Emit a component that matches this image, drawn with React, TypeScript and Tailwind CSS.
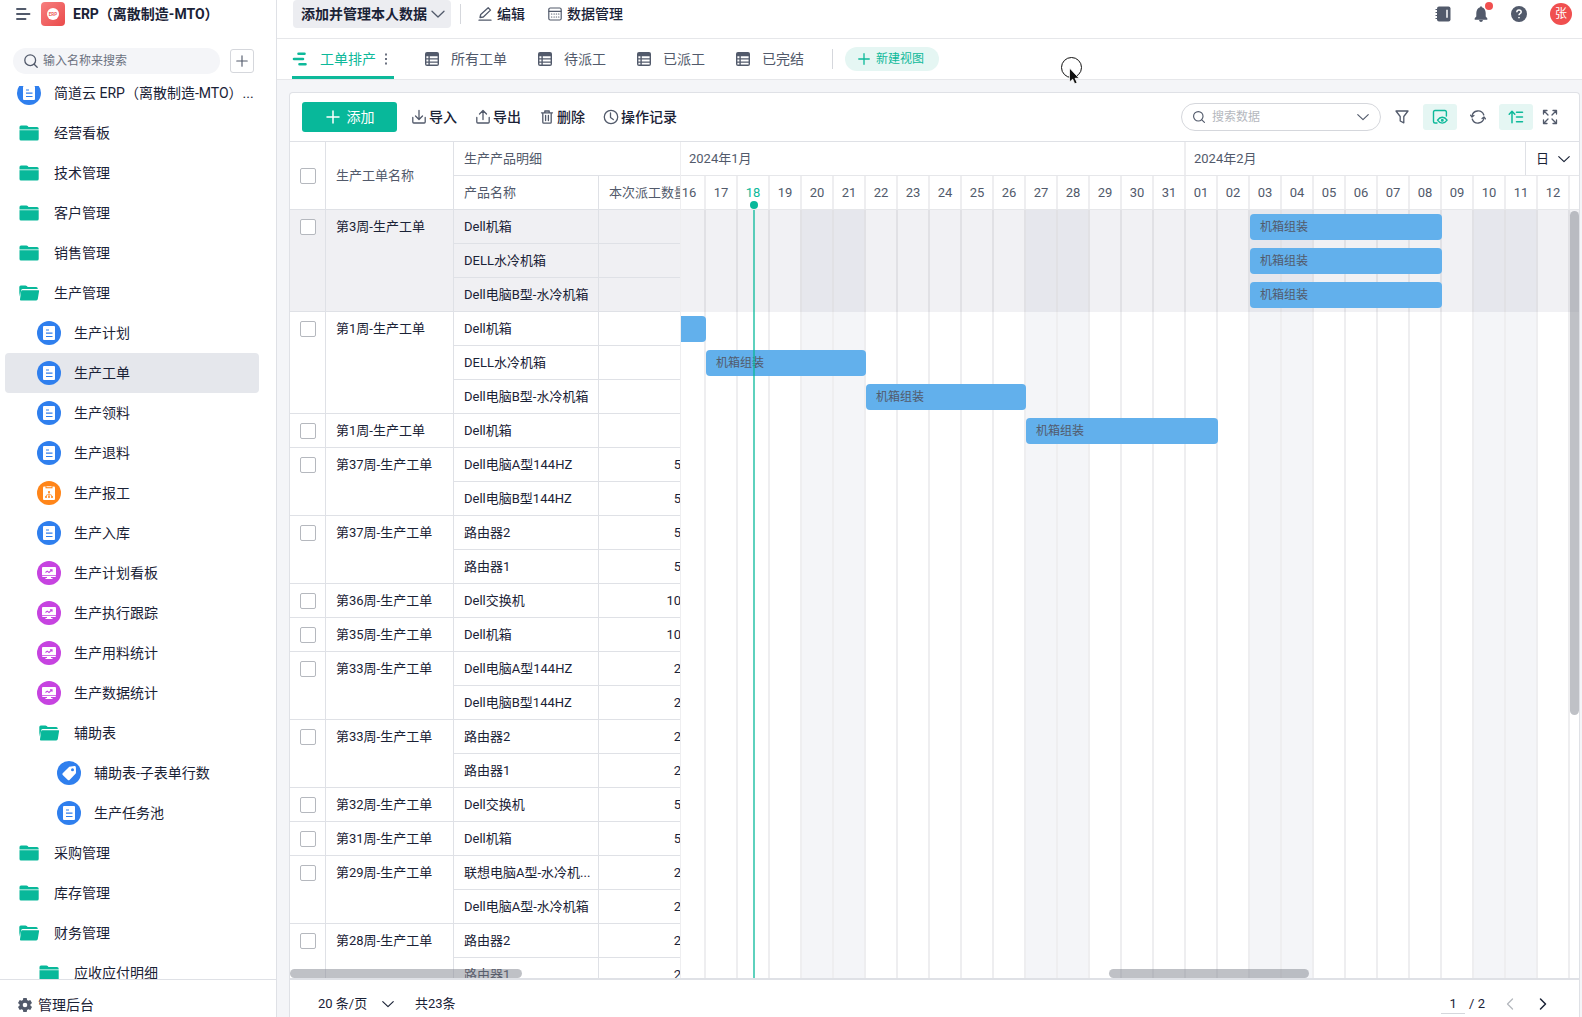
import { useState } from "react";
import type { ReactNode } from "react";
import { clsx } from "clsx";

type IconKind = "doc" | "folder" | "folderOpen" | "report" | "board" | "tag";

interface NavItem {
  name: string;
  icon: IconKind;
  level: 0 | 1 | 2;
}

const navItems: NavItem[] = [
  { name: "简道云 ERP（离散制造-MTO）...", icon: "doc", level: 0 },
  { name: "经营看板", icon: "folder", level: 0 },
  { name: "技术管理", icon: "folder", level: 0 },
  { name: "客户管理", icon: "folder", level: 0 },
  { name: "销售管理", icon: "folder", level: 0 },
  { name: "生产管理", icon: "folderOpen", level: 0 },
  { name: "生产计划", icon: "doc", level: 1 },
  { name: "生产工单", icon: "doc", level: 1 },
  { name: "生产领料", icon: "doc", level: 1 },
  { name: "生产退料", icon: "doc", level: 1 },
  { name: "生产报工", icon: "report", level: 1 },
  { name: "生产入库", icon: "doc", level: 1 },
  { name: "生产计划看板", icon: "board", level: 1 },
  { name: "生产执行跟踪", icon: "board", level: 1 },
  { name: "生产用料统计", icon: "board", level: 1 },
  { name: "生产数据统计", icon: "board", level: 1 },
  { name: "辅助表", icon: "folderOpen", level: 1 },
  { name: "辅助表-子表单行数", icon: "tag", level: 2 },
  { name: "生产任务池", icon: "doc", level: 2 },
  { name: "采购管理", icon: "folder", level: 0 },
  { name: "库存管理", icon: "folder", level: 0 },
  { name: "财务管理", icon: "folderOpen", level: 0 },
  { name: "应收应付明细", icon: "folder", level: 1 },
];

const orders = [
  { name: "第3周-生产工单", lines: [["Dell机箱", ""], ["DELL水冷机箱", ""], ["Dell电脑B型-水冷机箱", ""]] },
  { name: "第1周-生产工单", lines: [["Dell机箱", ""], ["DELL水冷机箱", ""], ["Dell电脑B型-水冷机箱", ""]] },
  { name: "第1周-生产工单", lines: [["Dell机箱", ""]] },
  { name: "第37周-生产工单", lines: [["Dell电脑A型144HZ", "5"], ["Dell电脑B型144HZ", "5"]] },
  { name: "第37周-生产工单", lines: [["路由器2", "5"], ["路由器1", "5"]] },
  { name: "第36周-生产工单", lines: [["Dell交换机", "10"]] },
  { name: "第35周-生产工单", lines: [["Dell机箱", "10"]] },
  { name: "第33周-生产工单", lines: [["Dell电脑A型144HZ", "2"], ["Dell电脑B型144HZ", "2"]] },
  { name: "第33周-生产工单", lines: [["路由器2", "2"], ["路由器1", "2"]] },
  { name: "第32周-生产工单", lines: [["Dell交换机", "5"]] },
  { name: "第31周-生产工单", lines: [["Dell机箱", "5"]] },
  { name: "第29周-生产工单", lines: [["联想电脑A型-水冷机...", "2"], ["Dell电脑A型-水冷机箱", "2"]] },
  { name: "第28周-生产工单", lines: [["路由器2", "2"], ["路由器1", "2"]] },
];

const days = [
  "16", "17", "18", "19", "20", "21", "22", "23", "24", "25", "26", "27", "28", "29",
  "30", "31", "01", "02", "03", "04", "05", "06", "07", "08", "09", "10", "11", "12",
];
const weekends = [4, 5, 11, 12, 18, 19, 25, 26];
const TODAY = 2;

const DAY_WIDTH = 32;
const ROW_HEIGHT = 34;

// row, first day (index into days) and length in days
const bars = [
  { row: 0, start: 18, span: 6, label: "机箱组装" },
  { row: 1, start: 18, span: 6, label: "机箱组装" },
  { row: 2, start: 18, span: 6, label: "机箱组装" },
  { row: 3, start: -4, span: 5, label: "" },
  { row: 4, start: 1, span: 5, label: "机箱组装" },
  { row: 5, start: 6, span: 5, label: "机箱组装" },
  { row: 6, start: 11, span: 6, label: "机箱组装" },
];

const views = ["所有工单", "待派工", "已派工", "已完结"];

interface GlyphProps {
  size?: number;
  width?: number;
  className?: string;
  children: ReactNode;
}

function Glyph({ size = 16, width = 1.3, className, children }: GlyphProps) {
  return (
    <svg
      width={size}
      height={size}
      viewBox="0 0 16 16"
      fill="none"
      stroke="currentColor"
      strokeWidth={width}
      strokeLinecap="round"
      strokeLinejoin="round"
      className={clsx("shrink-0", className)}
      aria-hidden="true"
    >
      {children}
    </svg>
  );
}

function Chevron({ className }: { className?: string }) {
  return (
    <Glyph className={className}>
      <path d="M2 5.200 8 11l6-5.800" />
    </Glyph>
  );
}

function SearchGlyph({ className }: { className?: string }) {
  return (
    <Glyph className={className}>
      <circle cx="7.2" cy="7.2" r="5.400" />
      <path d="m11.200 11.200 3 3" />
    </Glyph>
  );
}

function PlusGlyph({ size = 16, width = 1.3 }: { size?: number; width?: number }) {
  return (
    <Glyph size={size} width={width}>
      <path d="M8 2v12M2 8h12" />
    </Glyph>
  );
}

function TableGlyph() {
  return (
    <svg width="16" height="16" viewBox="0 0 16 16" className="shrink-0" aria-hidden="true">
      <rect x="1" y="1" width="14" height="14" rx="2" fill="#525a6b" />
      <path
        d="M2.4 5.3h2v2h-2zM5.8 5.3h7.8v2H5.8zM2.4 8.5h2v2h-2zM5.8 8.5h7.8v2H5.8zM2.4 11.7h2v1.9h-2zM5.8 11.7h7.8v1.9H5.8z"
        fill="#fff"
      />
    </svg>
  );
}

function NavIcon({ kind }: { kind: IconKind }) {
  if (kind === "folder") {
    return (
      <svg width="24" height="24" viewBox="0 0 24 24" fill="#08b89a" aria-hidden="true">
        <path d="M2.5 6Q2.5 4.500 4 4.500h5.500q.7 0 1.200.600L11.500 6H20q1.700 0 1.700 1.700V8H2.500z" />
        <path d="M2.500 9.300h19.200V18q0 1.500-1.500 1.500H4q-1.500 0-1.500-1.500z" />
        <path d="M2.500 8h19.200v1.300H2.500z" opacity=".45" />
      </svg>
    );
  }
  if (kind === "folderOpen") {
    return (
      <svg width="24" height="24" viewBox="0 0 24 24" fill="#08b89a" aria-hidden="true">
        <path d="M2.300 6q0-1.500 1.500-1.500h4.700q.7 0 1.200.500l1 1h8.500q1.500 0 1.500 1.500V8H5.800q-1.300 0-1.600 1.300L2.900 15.500 2.300 12z" />
        <path d="M5.300 9.200h16.200q.8 0 .6.900l-1.300 8q-.3 1.400-1.500 1.400H4q-1.300 0-1-1.200L4.200 10q.200-.8 1.100-.8z" />
      </svg>
    );
  }
  if (kind === "report") {
    return (
      <svg width="24" height="24" viewBox="0 0 24 24" aria-hidden="true">
        <circle cx="12" cy="12" r="12" fill="#ff8519" />
        <rect x="6" y="5.500" width="12" height="13.500" rx="1" fill="#fff" />
        <path d="M8.500 5.300h7v2h-7z" fill="#ff8519" />
        <path d="M9.500 5.300h5v.900h-5z" fill="#fff" />
        <path d="M12 11v4.500M9 15.500l.800-1.700h4.400l.8 1.700" stroke="#ff8519" strokeWidth=".7" fill="none" />
        <circle cx="12" cy="11" r="1.100" fill="#ff8519" />
        <circle cx="9" cy="16" r="1" fill="#ff8519" />
        <circle cx="12" cy="16" r="1" fill="#ff8519" />
        <circle cx="15" cy="16" r="1" fill="#ff8519" />
      </svg>
    );
  }
  if (kind === "board") {
    return (
      <svg width="24" height="24" viewBox="0 0 24 24" aria-hidden="true">
        <circle cx="12" cy="12" r="12" fill="#c643e0" />
        <path d="M6 6h12q1 0 1 1v7H5V7q0-1 1-1z" fill="#fff" />
        <path d="M5 14.800h14q0 1.200-1 1.200h-4v1h1.500v1h-7v-1H10v-1H6q-1 0-1-1.200z" fill="#fff" />
        <path d="m8.500 11.500 1.700-1.400 1.800 1.400 2.600-2.400M13 8.800h2v2" stroke="#c643e0" strokeWidth="1.100" fill="none" />
      </svg>
    );
  }
  if (kind === "tag") {
    return (
      <svg width="24" height="24" viewBox="0 0 24 24" aria-hidden="true">
        <circle cx="12" cy="12" r="12" fill="#2f7fee" />
        <path
          d="M12.300 5.800 17.500 5q1.300 0 1.400 1.400l.1 5q0 .8-.5 1.300l-6 6.200q-.8.700-1.600 0l-5.200-5q-.8-.8 0-1.600z"
          fill="#fff"
        />
        <circle cx="15.500" cy="8.800" r="1.500" fill="#2f7fee" />
      </svg>
    );
  }
  return (
    <svg width="24" height="24" viewBox="0 0 24 24" aria-hidden="true">
      <circle cx="12" cy="12" r="12" fill="#2f7fee" />
      <rect x="6" y="5" width="12" height="14" rx="1" fill="#fff" />
      <path d="M9 9h3M9 12.200h6.500M9 15.500h6.500" stroke="#2f7fee" strokeWidth="1.200" />
    </svg>
  );
}

function Sidebar() {
  const [active, setActive] = useState("生产工单");

  return (
    <aside className="flex w-[277px] shrink-0 flex-col border-r border-[#dfe1e6] bg-white">
      <div className="flex h-7 items-center pl-[15px]">
        <button aria-label="菜单" className="text-[#525a6b]">
          <Glyph width={1.9}>
            <path d="M2 3h8.500M2 8h12.500M2 13h8.500" />
          </Glyph>
        </button>
        <svg width="24" height="24" viewBox="0 0 24 24" className="ml-2.5" aria-hidden="true">
          <defs>
            <linearGradient id="logo" x1="0" y1="0" x2="1" y2="1">
              <stop offset="0" stopColor="#f78080" />
              <stop offset="1" stopColor="#ea4a4a" />
            </linearGradient>
          </defs>
          <rect width="24" height="24" rx="4" fill="url(#logo)" />
          <circle cx="12" cy="12" r="6" fill="#fff" />
          <text x="12" y="13.700" fontSize="4.500" fontWeight="700" textAnchor="middle" fill="#ee5f5f">ERP</text>
        </svg>
        <h1 className="ml-2 text-sm font-bold">ERP（离散制造-MTO）</h1>
      </div>

      <div className="mt-5 flex items-center gap-2.5 pl-[13px]">
        <label className="flex h-[26px] w-[207px] items-center gap-1 rounded-full bg-[#f4f5f8] pl-2.5">
          <SearchGlyph className="text-[#525a6b]" />
          <input
            aria-label="输入名称来搜索"
            placeholder="输入名称来搜索"
            className="w-full min-w-0 bg-transparent text-xs outline-none placeholder:text-[#6b7180]"
          />
        </label>
        <button
          aria-label="新建"
          className="flex size-6 items-center justify-center rounded-[3px] border border-[#d5d7dc] text-[#525a6b]"
        >
          <PlusGlyph size={14} />
        </button>
      </div>

      <nav className="mt-3 min-h-0 flex-1 overflow-hidden">
        <ul className="-mt-[13px] pl-[5px]">
          {navItems.map((item) => (
            <li key={item.name}>
              <a
                href="#"
                onClick={() => setActive(item.name)}
                className={clsx(
                  "flex h-10 w-[254px] items-center gap-[13px] rounded-[4px] text-sm whitespace-nowrap",
                  item.level === 0 && "pl-3",
                  item.level === 1 && "pl-8",
                  item.level === 2 && "pl-[52px]",
                  item.name === active && "bg-[#e5e7ec]"
                )}
              >
                <span className="size-6 shrink-0">
                  <NavIcon kind={item.icon} />
                </span>
                {item.name}
              </a>
            </li>
          ))}
        </ul>
      </nav>

      <div className="h-[38px] shrink-0 border-t border-[#dfe1e6] pt-[15px] pl-[17px]">
        <a href="#" className="flex h-5 items-center gap-[5px] text-sm">
          <svg width="16" height="16" viewBox="0 0 16 16" aria-hidden="true">
            <path
              fill="#525a6b"
              fillRule="evenodd"
              d="M6.300 1h3.400l.4 2.100 1.200.7 2-.7 1.700 2.900-1.600 1.400v1.200l1.600 1.400-1.700 2.900-2-.7-1.200.7-.4 2.100H6.300l-.4-2.100-1.200-.7-2 .7L1 10l1.600-1.400V7.400L1 6l1.700-2.900 2 .7 1.200-.7zM8 5.700a2.300 2.300 0 1 0 0 4.600 2.300 2.300 0 0 0 0-4.600z"
            />
          </svg>
          管理后台
        </a>
      </div>
    </aside>
  );
}

function TopBar() {
  return (
    <header className="flex h-[39px] shrink-0 items-start justify-between border-b border-[#e6e7ea] bg-white pr-2.5 pl-4">
      <div className="flex h-7 items-center">
        <button className="flex h-7 items-center gap-[3px] rounded-[4px] bg-[#ecedf1] pr-[5px] pl-2 text-sm font-bold">
          添加并管理本人数据
          <Chevron className="text-[#525a6b]" />
        </button>
        <span className="ml-[9px] h-5 w-px bg-[#d5d7dc]" />
        <button className="ml-4 flex items-center gap-1 text-sm font-medium">
          <Glyph className="text-[#525a6b]">
            <path d="M2 14.200h12M3 11.500l.7-3L11.200 1.800l2.300 2.300L6.300 11z" />
          </Glyph>
          编辑
        </button>
        <button className="ml-[22px] flex items-center gap-1 text-sm font-medium">
          <Glyph width={1.200} className="text-[#525a6b]">
            <rect x="1.800" y="2" width="12.400" height="12" rx="1.500" />
            <path d="M2 5.300h12" />
            <path d="M4.500 8h.3M7 8h.3M9.300 8h.3M11.600 8h.3M4.500 11h.3M7 11h.3M9.300 11h.3M11.600 11h.3" />
          </Glyph>
          数据管理
        </button>
      </div>

      <div className="flex h-7 items-center text-[#525a6b]">
        <button aria-label="通讯录">
          <svg width="16" height="16" viewBox="0 0 16 16" aria-hidden="true">
            <rect x="2" y=".5" width="13.500" height="15" rx="2" fill="#525a6b" />
            <path d="M.5 3.500h3M.5 6.500h3M.5 9.500h3M.5 12.500h3" stroke="#525a6b" />
            <path d="M12 3.800v8" stroke="#fff" strokeWidth="1.500" />
          </svg>
        </button>
        <button aria-label="消息" className="relative ml-[22px]">
          <svg width="16" height="16" viewBox="0 0 16 16" fill="#525a6b" aria-hidden="true">
            <path d="M8 .3q.9 0 .9 1Q12.500 2.500 12.700 7v3.500l1.600 1.800v1.500H1.700v-1.500l1.600-1.800V7q.2-4.500 3.800-5.700 0-1 .9-1zM6 14h4q-.4 1.900-2 1.900T6 14z" />
          </svg>
          <span className="absolute -top-1 -right-1 size-2 rounded-full bg-[#f04f4f]" />
        </button>
        <button aria-label="帮助" className="ml-[22px]">
          <svg width="16" height="16" viewBox="0 0 16 16" aria-hidden="true">
            <circle cx="8" cy="8" r="8" fill="#525a6b" />
            <path
              d="M5.800 6.200q.1-2.200 2.200-2.200t2.200 2q0 1-1.200 1.700Q8 8.300 8 9.300M8 11v1.300"
              fill="none"
              stroke="#fff"
              strokeWidth="1.500"
            />
          </svg>
        </button>
        <span className="ml-[23px] flex size-[22px] items-center justify-center rounded-full bg-[#f04f4f] text-xs text-white">
          张
        </span>
      </div>
    </header>
  );
}

function ViewTabs() {
  return (
    <nav className="flex h-[41px] shrink-0 items-center border-b border-[#e6e7ea] bg-white pl-[15px] text-sm text-[#525a6b]">
      <div className="flex h-full items-center gap-[30px]">
        <a
          href="#"
          className="flex h-full items-center border-b-[3px] border-[#0db99a] pt-[3px] text-[#0db99a]"
        >
          <svg width="16" height="16" viewBox="0 0 16 16" className="mr-3" aria-hidden="true">
            <path
              d="M6.500 2.800h6M2 8h9M7.500 13.200h6"
              stroke="#0db99a"
              strokeWidth="2.600"
              strokeLinecap="round"
            />
          </svg>
          工单排产
          <svg width="16" height="16" viewBox="0 0 16 16" className="ml-0.5" fill="#6b7180" aria-hidden="true">
            <path d="M7 2.500h2v2H7zM7 7h2v2H7zM7 11.500h2v2H7z" />
          </svg>
        </a>
        {views.map((view) => (
          <a key={view} href="#" className="flex items-center gap-[11px]">
            <TableGlyph />
            {view}
          </a>
        ))}
      </div>
      <span className="ml-7 h-5 w-px bg-[#d5d7dc]" />
      <button className="ml-3 flex h-6 items-center gap-[5px] rounded-full bg-[#e5f6f3] px-3 text-xs text-[#0db99a]">
        <PlusGlyph size={14} width={1.500} />
        <span className="pr-[3px]">新建视图</span>
      </button>
    </nav>
  );
}

function Toolbar() {
  return (
    <div className="flex h-[49px] shrink-0 items-center border-b border-[#dfe1e6] pr-[21px] pl-3">
      <button className="flex h-[30px] w-[95px] items-center justify-center gap-1.5 rounded-[3px] bg-[#08b89a] text-sm text-white">
        <PlusGlyph width={1.500} />
        添加
      </button>
      <div className="ml-3.5 flex items-center gap-[18px] text-sm font-medium">
        <button className="flex items-center gap-0.5">
          <Glyph className="text-[#525a6b]">
            <path d="M8 1.500v8.500M4.500 7 8 10.500 11.500 7M1.800 8.500V13q0 1 1 1h10.400q1 0 1-1V8.500" />
          </Glyph>
          导入
        </button>
        <button className="flex items-center gap-0.5">
          <Glyph className="text-[#525a6b]">
            <path d="M8 10.500V2M4.500 5 8 1.500 11.500 5M1.800 8.500V13q0 1 1 1h10.400q1 0 1-1V8.500" />
          </Glyph>
          导出
        </button>
        <button className="flex items-center gap-0.5">
          <Glyph className="text-[#525a6b]">
            <path d="M2.500 3.800h11M5.800 3.500V2h4.400v1.500M3.800 4v9.200q0 1 1 1h6.400q1 0 1-1V4M6.600 6.500v5M9.400 6.500v5" />
          </Glyph>
          删除
        </button>
        <button className="flex items-center gap-0.5">
          <Glyph className="text-[#525a6b]">
            <circle cx="8" cy="8" r="6.700" />
            <path d="M7.500 4v4.500l2.800 2" />
          </Glyph>
          操作记录
        </button>
      </div>

      <div className="ml-auto flex items-center text-[#525a6b]">
        <label className="flex h-7 w-[200px] items-center gap-1.5 rounded-full border border-[#d5d7dc] px-2.5">
          <SearchGlyph className="size-3.5" />
          <input
            aria-label="搜索数据"
            placeholder="搜索数据"
            className="w-full min-w-0 bg-transparent text-xs outline-none placeholder:text-[#b5b8be]"
          />
          <Chevron className="size-3.5" />
        </label>
        <button aria-label="筛选" className="ml-[13px]">
          <Glyph>
            <path d="M2 2h12L9.800 7.500v6.300L6.200 12V7.500z" />
          </Glyph>
        </button>
        <button
          aria-label="显示设置"
          className="ml-[13px] flex h-[26px] w-[34px] items-center justify-center rounded-[3px] bg-[#e5f6f3] text-[#0db99a]"
        >
          <Glyph width={1.400}>
            <path d="M14.400 7V3q0-1.500-1.500-1.500H3Q1.500 1.500 1.500 3v9.500Q1.500 14 3 14h2" />
            <path d="M5.500 11.200q2-2.900 4.800-2.900t4.800 2.900q-2 2.900-4.800 2.900t-4.800-2.900z" />
            <circle cx="10.300" cy="11.200" r=".8" />
          </Glyph>
        </button>
        <button aria-label="刷新" className="ml-[13px]">
          <Glyph>
            <path d="M2 7.300A6.100 6.100 0 0 1 13.800 6M14 8.700A6.100 6.100 0 0 1 2.200 10" />
            <path d="M.5 6.200 2 8l1.900-1.500M15.500 9.800 14 8l-1.900 1.500" />
          </Glyph>
        </button>
        <button
          aria-label="排序"
          className="ml-[13px] flex h-[26px] w-[34px] items-center justify-center rounded-[3px] bg-[#e5f6f3] text-[#0db99a]"
        >
          <Glyph width={1.500}>
            <path d="M4 13.800V2.500M1.200 5.200 4 2.300l2.800 2.900M8.500 3.300h6M8.500 8h6M8.500 12.800h6" />
          </Glyph>
        </button>
        <button aria-label="全屏" className="ml-[9px]">
          <Glyph>
            <path d="M1.500 5V1.500H5M1.800 1.800 6 6M11 1.500h3.500V5M14.200 1.800 10 6M1.500 11v3.500H5M1.800 14.200 6 10M14.500 11v3.500H11M14.200 14.200 10 10" />
          </Glyph>
        </button>
      </div>
    </div>
  );
}

function Checkbox({ label }: { label: string }) {
  return (
    <input
      type="checkbox"
      aria-label={label}
      className="block size-4 appearance-none rounded-[2px] border border-[#b5b8be] bg-white checked:bg-[#08b89a]"
    />
  );
}

function OrderTable() {
  const cell = "border-b border-[#dfe1e6] p-0 px-2.5 text-left font-normal whitespace-nowrap";

  return (
    <div className="relative w-[390px] shrink-0 overflow-hidden">
      <table className="w-[391px] table-fixed border-separate border-spacing-0 text-[13px]">
        <colgroup>
          <col className="w-9" />
          <col className="w-32" />
          <col className="w-[145px]" />
          <col className="w-[82px]" />
        </colgroup>
        <thead className="text-[#525a6b]">
          <tr className="h-[34px]">
            <th rowSpan={2} className={clsx(cell, "border-r")}>
              <Checkbox label="全选" />
            </th>
            <th rowSpan={2} className={clsx(cell, "border-r")}>生产工单名称</th>
            <th colSpan={2} className={cell}>生产产品明细</th>
          </tr>
          <tr className="h-[34px]">
            <th className={clsx(cell, "border-r")}>产品名称</th>
            <th className={clsx(cell, "overflow-hidden pr-0")}>本次派工数量</th>
          </tr>
        </thead>
        {orders.map((order, index) => (
          <tbody key={index} className={clsx("text-[#1a2236]", index === 0 && "bg-[#f0f0f3]")}>
            {order.lines.map(([product, quantity], line) => (
              <tr key={product} className="h-[34px]">
                {line === 0 && (
                  <>
                    <td rowSpan={order.lines.length} className={clsx(cell, "border-r pt-[9px] align-top")}>
                      <Checkbox label={order.name} />
                    </td>
                    <td rowSpan={order.lines.length} className={clsx(cell, "border-r align-top leading-[33px]")}>
                      {order.name}
                    </td>
                  </>
                )}
                <td className={clsx(cell, "border-r")}>{product}</td>
                <td className="border-b border-[#dfe1e6] p-0 text-right">{quantity}</td>
              </tr>
            ))}
          </tbody>
        ))}
      </table>
      <div className="absolute bottom-0 left-0 h-[9px] w-[232px] rounded-full bg-[#8b8e98]/55" />
    </div>
  );
}

function Gantt() {
  return (
    <div className="flex min-w-0 flex-1 flex-col overflow-hidden border-l border-[#eeeef0] text-[13px] text-[#525a6b]">
      <div className="flex h-[34px] shrink-0 items-center border-b border-[#e6e7ea]">
        <div className="flex h-full w-[505px] shrink-0 items-center border-r-2 border-[#eeeef0] pl-2">2024年1月</div>
        <div className="flex-1 pl-2">2024年2月</div>
        <label className="relative flex h-full w-[54px] items-center border-l border-[#dfe1e6] text-[#1a2236]">
          <select aria-label="时间刻度" className="h-full w-full appearance-none bg-transparent pl-2.5 outline-none">
            <option>日</option>
            <option>周</option>
            <option>月</option>
          </select>
          <Chevron className="pointer-events-none absolute right-2 size-3.5" />
        </label>
      </div>

      <div className="relative -ml-[7px] flex h-[34px] shrink-0 border-b border-[#e6e7ea]">
        {days.map((day, index) => (
          <div
            key={day}
            className={clsx(
              "relative flex w-8 shrink-0 items-center justify-center border-r-2 border-[#eeeef0]",
              index === TODAY && "text-[#0db99a]"
            )}
          >
            {day}
            {index === TODAY && (
              <span className="absolute bottom-0 left-3 size-2 rounded-full bg-[#08b89a]" />
            )}
          </div>
        ))}
      </div>

      <div className="relative min-h-0 flex-1">
        <div className="relative -ml-[7px] h-full">
          <div className="flex h-full">
            {days.map((day, index) => (
              <div
                key={day}
                className={clsx(
                  "w-8 shrink-0 border-r-2 border-[#eeeef0]",
                  weekends.includes(index) && "bg-[#f4f5f8]"
                )}
              />
            ))}
          </div>
          <div className="absolute inset-x-0 top-0 h-[102px] bg-[#14143c]/6" />
          {bars.map((bar) => (
            <div
              key={bar.row}
              className="absolute flex h-[26px] items-center rounded-[4px] bg-[#62b0ec] pl-2.5 text-xs"
              style={{
                left: bar.start * DAY_WIDTH,
                top: bar.row * ROW_HEIGHT + 4,
                width: bar.span * DAY_WIDTH,
              }}
            >
              {bar.label}
            </div>
          ))}
          <div
            className="absolute inset-y-0 w-0.5 bg-[#08b89a]/65"
            style={{ left: TODAY * DAY_WIDTH + DAY_WIDTH / 2 - 1 }}
          />
        </div>
        <div className="absolute top-px right-0 h-[504px] w-[9px] rounded-full bg-[#8b8e98]/55" />
        <div className="absolute right-[270px] bottom-0 h-[9px] w-[200px] rounded-full bg-[#8b8e98]/55" />
      </div>
    </div>
  );
}

function Pager() {
  return (
    <footer className="flex h-[39px] shrink-0 items-start justify-between border-t-2 border-[#dfe1e6] pt-3.5 pr-7 pl-7 text-[13px] text-[#1a2236]">
      <div className="flex h-5 items-center">
        <label className="relative flex items-center">
          <select aria-label="每页条数" className="w-[77px] appearance-none bg-transparent outline-none">
            <option>20 条/页</option>
            <option>50 条/页</option>
            <option>100 条/页</option>
          </select>
          <Chevron className="pointer-events-none absolute right-0 size-3.5" />
        </label>
        <span className="ml-5">共23条</span>
      </div>
      <div className="flex h-5 items-center">
        <input
          aria-label="页码"
          defaultValue="1"
          className="w-6 border-b border-[#d5d7dc] text-center outline-none"
        />
        <span className="ml-1">/ 2</span>
        <button aria-label="上一页" className="ml-[17px] text-[#b5b8be]">
          <Glyph>
            <path d="M10.500 3 5.500 8l5 5" />
          </Glyph>
        </button>
        <button aria-label="下一页" className="ml-[17px]">
          <Glyph width={1.500}>
            <path d="m5.500 3 5 5-5 5" />
          </Glyph>
        </button>
      </div>
    </footer>
  );
}

export default function App() {
  return (
    <div className="relative flex h-screen overflow-hidden bg-[#f4f5f8] font-[Roboto,'Noto_Sans_CJK_SC',sans-serif] text-[#1a2236]">
      <Sidebar />
      <main className="flex min-w-0 flex-1 flex-col">
        <TopBar />
        <ViewTabs />
        <section className="mt-3 mr-0.5 ml-3 flex min-h-0 flex-1 flex-col rounded-t-[4px] border border-b-0 border-[#dfe1e6] bg-white">
          <Toolbar />
          <div className="flex min-h-0 flex-1">
            <OrderTable />
            <Gantt />
          </div>
          <Pager />
        </section>
      </main>

      {/* mouse pointer with its click ring */}
      <svg
        width="24"
        height="30"
        viewBox="0 0 24 30"
        className="pointer-events-none absolute top-14 left-[1060px]"
        aria-hidden="true"
      >
        <circle cx="11.500" cy="11.500" r="10" fill="none" stroke="#111" />
        <path
          d="M9.500 12v14l3.200-2.800 2 4.600 2.400-1-2-4.500h4z"
          fill="#111"
          stroke="#fff"
          strokeWidth=".8"
        />
      </svg>
    </div>
  );
}
